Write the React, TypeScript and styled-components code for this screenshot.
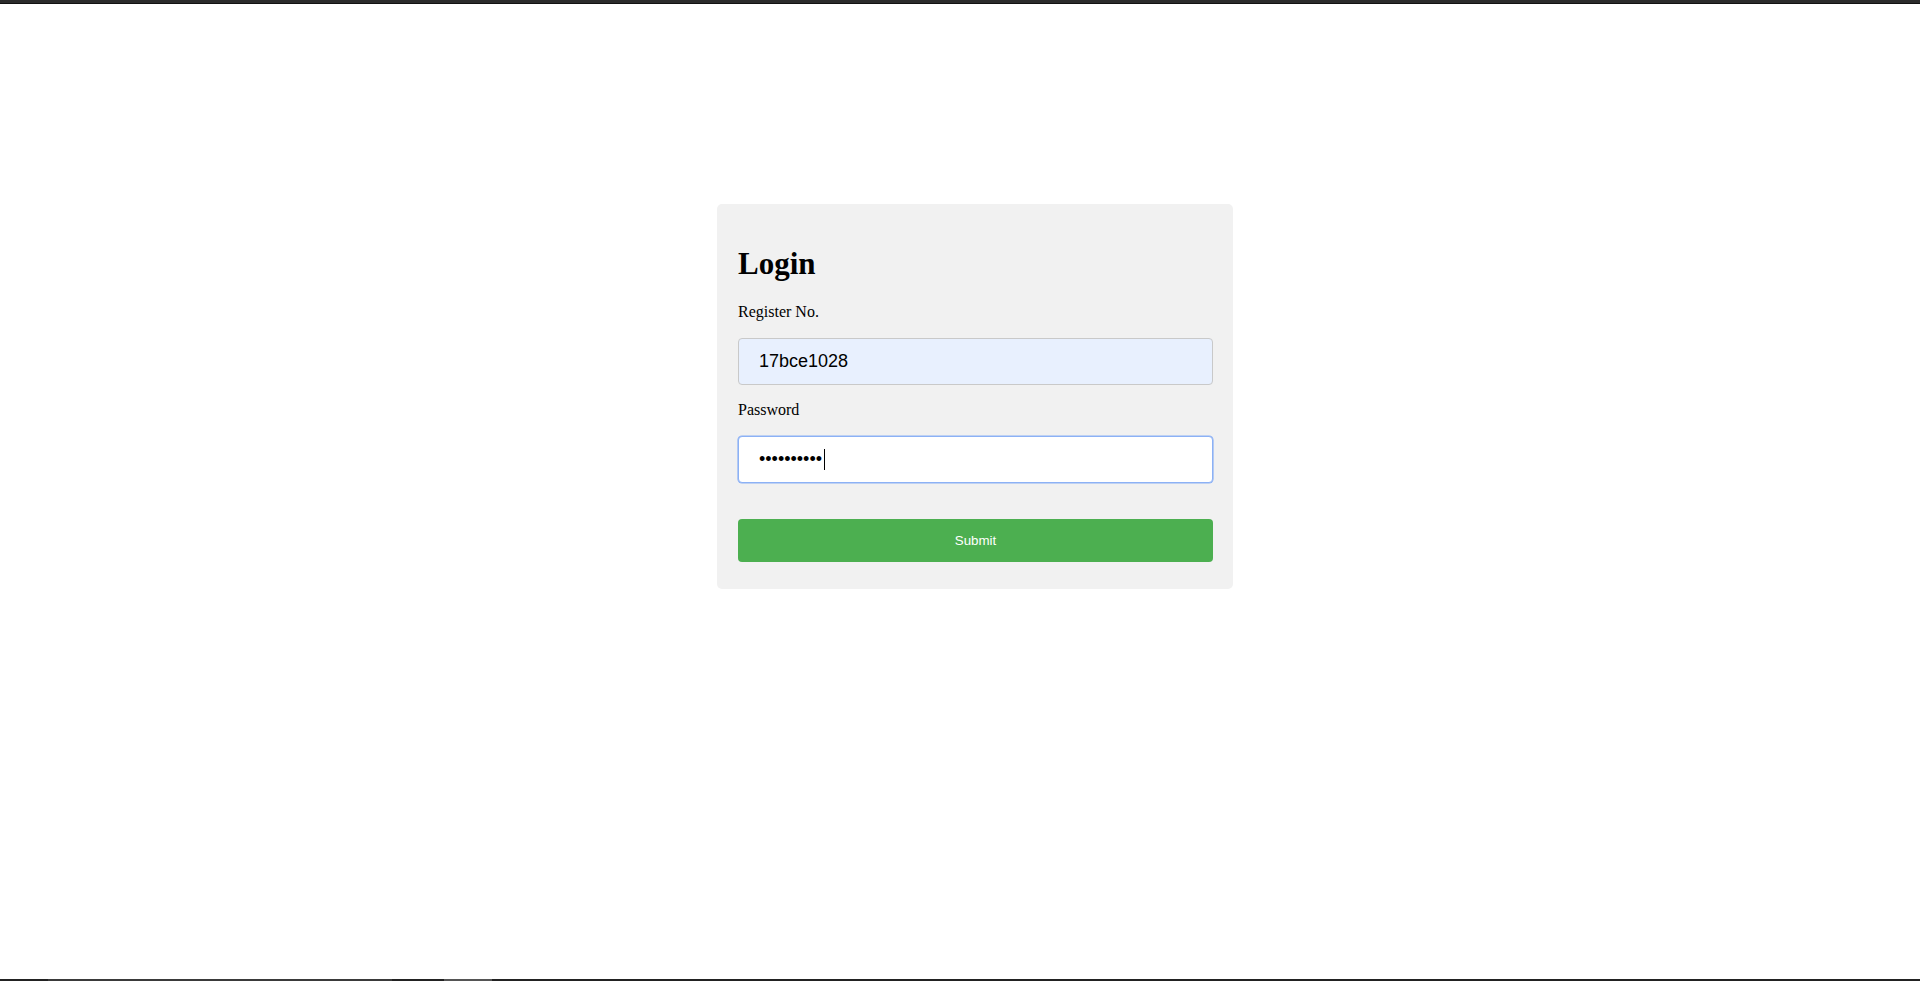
import React from "react";
import styled, { createGlobalStyle } from "styled-components";

const GlobalStyle = createGlobalStyle`
  html, body {
    margin: 0;
    padding: 0;
    background: #ffffff;
    font-family: "Liberation Serif", "Times New Roman", serif;
    color: #000;
    overflow: hidden;
  }
  * { box-sizing: border-box; }
`;

const Page = styled.div`
  height: 981px;
  display: flex;
  flex-direction: column;
  overflow: hidden;
`;

const TopBar = styled.div`
  height: 4px;
  flex: none;
  background: #2b2b2b;
  border-bottom: 1px solid #111;
`;

const Main = styled.main`
  flex: 1;
  display: flex;
  justify-content: center;
  align-items: flex-start;
  padding: 200px 0 0 30px;
`;

const BottomBar = styled.div`
  height: 2px;
  flex: none;
  display: flex;
  background: #222;
`;

const Segment = styled.div<{ $w: number; $c: string }>`
  width: ${(p) => p.$w}px;
  background: ${(p) => p.$c};
`;

const Card = styled.form`
  width: 516px;
  background: #f1f1f1;
  border-radius: 5px;
  padding: 20px 20px 27px 21px;
  display: flex;
  flex-direction: column;
`;

const Title = styled.h1`
  font-size: 31px;
  font-weight: bold;
  margin: 22px 0 21px;
`;

const Label = styled.label<{ $top: number }>`
  display: block;
  font-size: 16px;
  margin: ${(p) => p.$top}px 0 17px;
`;

const FieldWrap = styled.div`
  position: relative;
  width: 475px;
`;

const Input = styled.input<{ $autofill?: boolean; $focused?: boolean }>`
  display: block;
  width: 475px;
  height: 47px;
  padding: 12px 20px;
  font-family: "Liberation Sans", Arial, sans-serif;
  font-size: 18px;
  color: #000;
  border-radius: 4px;
  border: 1px solid ${(p) => (p.$focused ? "#8cb1f5" : "#c9c9c9")};
  box-shadow: ${(p) => (p.$focused ? "0 0 0 0.6px #8cb1f5" : "none")};
  background: ${(p) => (p.$autofill ? "#e8f0fe" : "#ffffff")};
  outline: none;
  caret-color: ${(p) => (p.$focused ? "transparent" : "auto")};
`;

const Caret = styled.span`
  position: absolute;
  left: 86px;
  top: 13px;
  width: 1px;
  height: 21px;
  background: #000;
`;

const SubmitButton = styled.button`
  margin-top: 36px;
  width: 475px;
  height: 43px;
  border: none;
  border-radius: 4px;
  background: #4caf50;
  color: #ffffff;
  font-family: "Liberation Sans", Arial, sans-serif;
  font-size: 13.33px;
  cursor: pointer;
`;

const segments: { w: number; c: string }[] = [
  { w: 48, c: "#222222" },
  { w: 344, c: "#3a3a3a" },
  { w: 52, c: "#222222" },
  { w: 48, c: "#555555" },
];

export default function App() {
  return (
    <>
      <GlobalStyle />
      <Page>
        <TopBar />
        <Main>
          <Card onSubmit={(e) => e.preventDefault()}>
            <Title>Login</Title>
            <Label $top={0} htmlFor="regno">Register No.</Label>
            <FieldWrap>
              <Input id="regno" type="text" defaultValue="17bce1028" $autofill />
            </FieldWrap>
            <Label $top={16} htmlFor="pwd">Password</Label>
            <FieldWrap>
              <Input id="pwd" type="password" defaultValue="abcdefghij" $focused />
              <Caret />
            </FieldWrap>
            <SubmitButton type="submit">Submit</SubmitButton>
          </Card>
        </Main>
        <BottomBar>
          {segments.map((s, i) => (
            <Segment key={i} $w={s.w} $c={s.c} />
          ))}
        </BottomBar>
      </Page>
    </>
  );
}
